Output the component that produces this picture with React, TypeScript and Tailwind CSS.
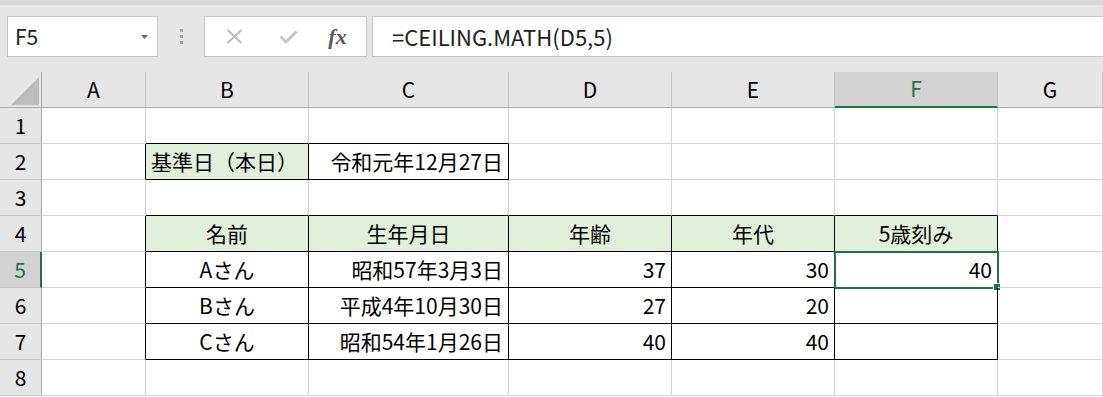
import React from 'react';

type Align = 'left' | 'center' | 'right';

interface Cell {
  text?: string;
  align?: Align;
  fill?: boolean;
}

const COLS = ['A', 'B', 'C', 'D', 'E', 'F', 'G'];

// row -> col index (0 = A) -> cell
const DATA: Record<number, Record<number, Cell>> = {
  2: {
    1: { text: '基準日（本日）', align: 'left', fill: true },
    2: { text: '令和元年12月27日', align: 'right' },
  },
  4: {
    1: { text: '名前', align: 'center', fill: true },
    2: { text: '生年月日', align: 'center', fill: true },
    3: { text: '年齢', align: 'center', fill: true },
    4: { text: '年代', align: 'center', fill: true },
    5: { text: '5歳刻み', align: 'center', fill: true },
  },
  5: {
    1: { text: 'Aさん', align: 'center' },
    2: { text: '昭和57年3月3日', align: 'right' },
    3: { text: '37', align: 'right' },
    4: { text: '30', align: 'right' },
    5: { text: '40', align: 'right' },
  },
  6: {
    1: { text: 'Bさん', align: 'center' },
    2: { text: '平成4年10月30日', align: 'right' },
    3: { text: '27', align: 'right' },
    4: { text: '20', align: 'right' },
    5: { text: '', align: 'right' },
  },
  7: {
    1: { text: 'Cさん', align: 'center' },
    2: { text: '昭和54年1月26日', align: 'right' },
    3: { text: '40', align: 'right' },
    4: { text: '40', align: 'right' },
    5: { text: '', align: 'right' },
  },
};

const inTable = (r: number, c: number) => DATA[r] !== undefined && DATA[r][c] !== undefined;

const alignClass: Record<Align, string> = {
  left: 'justify-start',
  center: 'justify-center',
  right: 'justify-end',
};

const Toolbar: React.FC = () => (
  <div className="h-[72px] bg-[#e6e6e6] flex flex-col">
    <div className="h-[5px] bg-[#d8d8d8]" />
    <div className="flex items-start pt-[11px] pl-[7px]">
      <div className="w-[151px] h-[41px] bg-white border border-[#c6c6c6] flex items-center justify-between pl-[7px] pr-[9px]">
        <span className="text-[21px] text-[#222]">F5</span>
        <svg width="7" height="4" viewBox="0 0 7 4">
          <path d="M0 0 L7 0 L3.5 4 Z" fill="#6a6a6a" />
        </svg>
      </div>
      <div className="w-[46px] h-[41px] flex flex-col items-center justify-center gap-[3px]">
        <div className="w-[3px] h-[3px] bg-[#a6a6a6]" />
        <div className="w-[3px] h-[3px] bg-[#a6a6a6]" />
        <div className="w-[3px] h-[3px] bg-[#a6a6a6]" />
      </div>
      <div className="w-[163px] h-[41px] bg-white border border-[#c6c6c6] flex items-center">
        <div className="w-[56px] flex justify-center pl-[2px]">
          <svg width="17" height="15" viewBox="0 0 17 15">
            <path d="M1.5 1 L15.5 14 M15.5 1 L1.5 14" stroke="#bdbdbd" strokeWidth="2" />
          </svg>
        </div>
        <div className="w-[52px] flex justify-center pl-[2px]">
          <svg width="19" height="14" viewBox="0 0 19 14">
            <path d="M1.5 6.5 L7 12 L17.5 1.5" stroke="#c4c4c4" strokeWidth="2.8" fill="none" />
          </svg>
        </div>
        <div className="flex-1 flex justify-center pr-[4px]">
          <span className="font-['Liberation_Serif',serif] italic font-bold text-[22px] text-[#5a5a5a] leading-none">fx</span>
        </div>
      </div>
      <div className="ml-[5px] flex-1 h-[41px] bg-white border border-[#c6c6c6] border-r-0 flex items-center pl-[19px]">
        <span className="text-[22px] text-[#222]">=CEILING.MATH(D5,5)</span>
      </div>
    </div>
  </div>
);

export default function App() {
  const rows = [1, 2, 3, 4, 5, 6, 7, 8];

  return (
    <div className="w-[1103px] h-[397px] overflow-hidden bg-white font-['Noto_Sans_CJK_JP',sans-serif] text-black">
      <Toolbar />
      <div className="grid grid-cols-[42px_104px_163px_200px_163px_163px_163px_105px] grid-rows-[36px_repeat(8,36px)]">
        {/* corner */}
        <div className="bg-[#e6e6e6] border-r border-b border-[#ababab] flex items-end justify-end pr-[2px] pb-[2px]">
          <svg width="28" height="28" viewBox="0 0 28 28">
            <path d="M0 28 L28 28 L28 0 Z" fill="#bdbdbd" />
          </svg>
        </div>
        {COLS.map((col) =>
          col === 'F' ? (
            <div key={col} className="bg-[#d2d2d2] border-r border-r-[#c6c6c6] border-b-2 border-b-[#217346] flex items-center justify-center text-[21px] text-[#217346]">
              {col}
            </div>
          ) : (
            <div key={col} className="bg-[#e6e6e6] border-r border-r-[#c6c6c6] border-b border-b-[#ababab] flex items-center justify-center text-[21px]">
              {col}
            </div>
          )
        )}

        {rows.map((r) => (
          <React.Fragment key={r}>
            {r === 5 ? (
              <div className="bg-[#d2d2d2] border-r-2 border-r-[#217346] border-b border-b-[#c6c6c6] flex items-center justify-center text-[21px] text-[#217346]">
                {r}
              </div>
            ) : (
              <div className="bg-[#e6e6e6] border-r border-r-[#ababab] border-b border-b-[#c6c6c6] flex items-center justify-center text-[21px]">
                {r}
              </div>
            )}
            {COLS.map((_, c) => {
              const cell = DATA[r]?.[c];
              const blackR = inTable(r, c) || inTable(r, c + 1);
              const blackB = inTable(r, c) || inTable(r + 1, c);
              const selected = r === 5 && c === 5;
              return (
                <div
                  key={c}
                  className={`relative flex items-center px-[5px] text-[21px] border-r border-b ${blackR ? 'border-r-black' : 'border-r-[#d4d4d4]'} ${blackB ? 'border-b-black' : 'border-b-[#d4d4d4]'} ${cell?.fill ? 'bg-[#e2efda]' : ''} ${alignClass[cell?.align ?? 'left']}`}
                >
                  <span className="whitespace-nowrap">{cell?.text}</span>
                  {selected && (
                    <>
                      <div className="absolute -left-[1px] -top-[1px] -right-[2px] -bottom-[2px] border-2 border-[#217346] pointer-events-none" />
                      <div className="absolute -right-[4px] -bottom-[4px] w-[8px] h-[8px] bg-[#217346] border border-white" />
                    </>
                  )}
                </div>
              );
            })}
          </React.Fragment>
        ))}
      </div>
    </div>
  );
}
